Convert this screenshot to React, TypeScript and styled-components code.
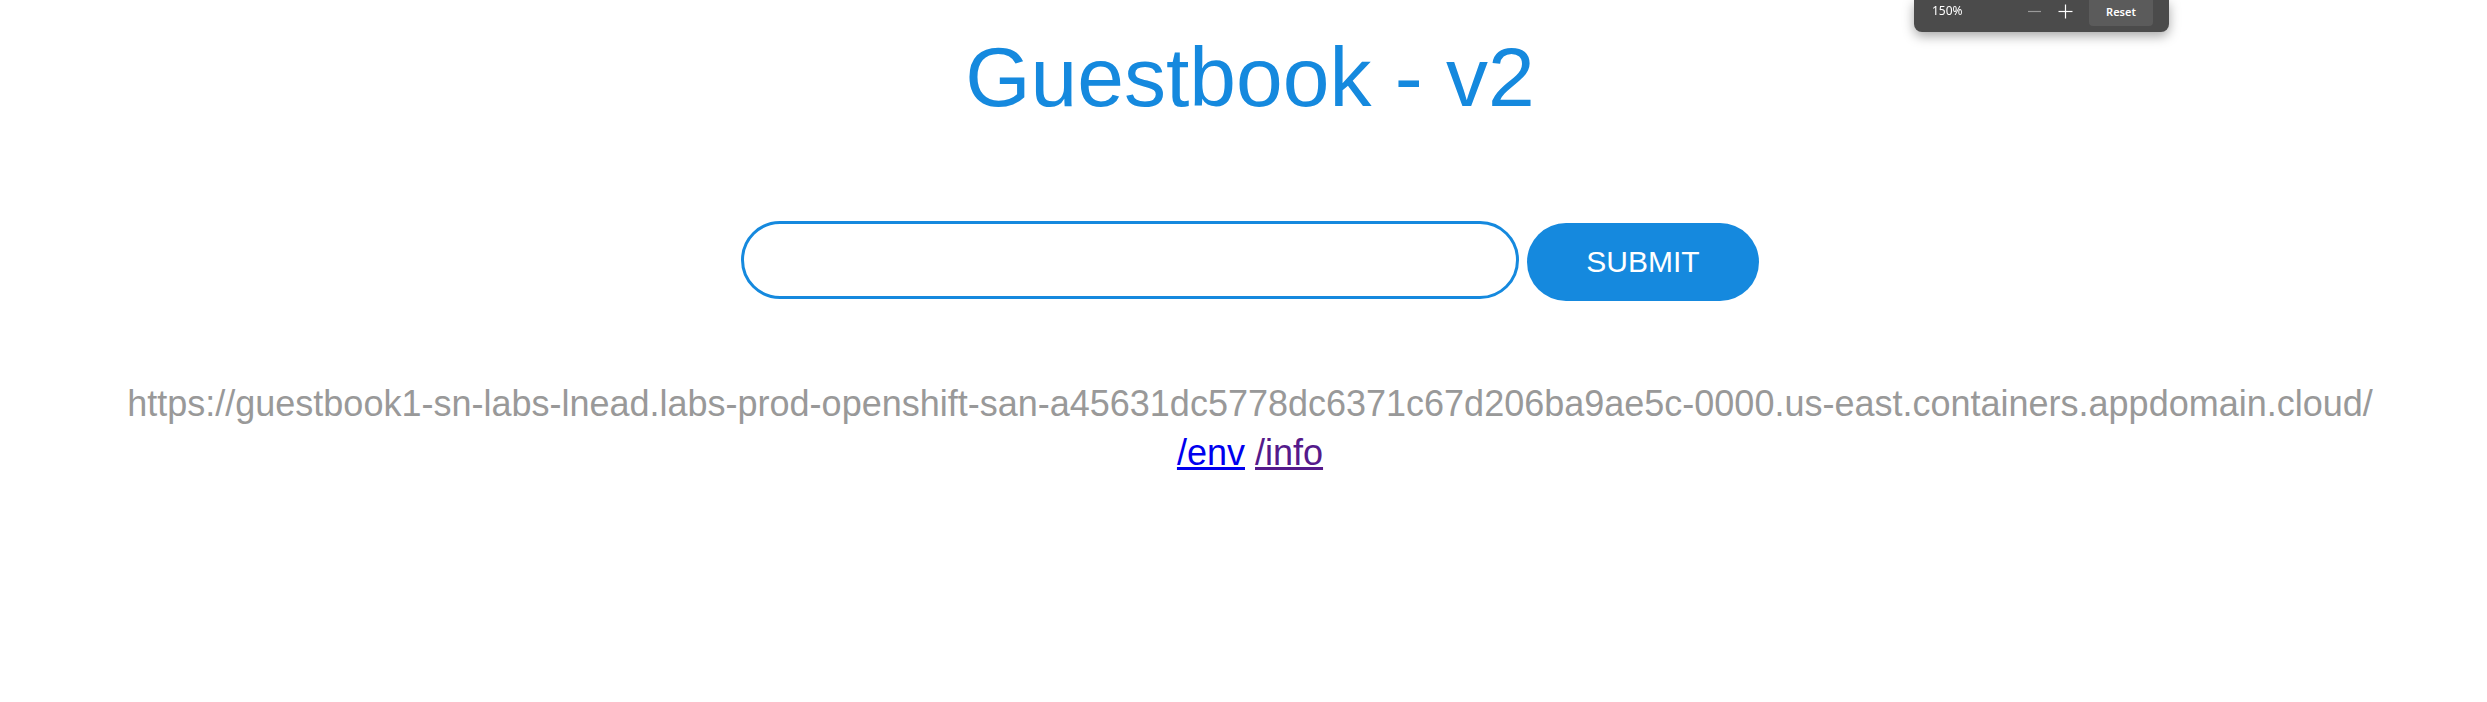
import { useState } from "react";
import styled, { createGlobalStyle } from "styled-components";

const GlobalStyle = createGlobalStyle`
  html, body {
    margin: 0;
    padding: 0;
    background: #ffffff;
  }
  body {
    font-family: "Liberation Sans", Arial, sans-serif;
  }
`;

const BLUE = "#1589de";

const Page = styled.main`
  min-height: 702px;
  padding: 30px 0 0 13px;
  text-align: center;
  box-sizing: border-box;
`;

const Title = styled.h1`
  margin: 0;
  font-size: 84px;
  font-weight: normal;
  line-height: 94px;
  color: ${BLUE};
`;

const EntryForm = styled.form`
  display: flex;
  justify-content: center;
  align-items: flex-start;
  gap: 8px;
  margin-top: 97px;
`;

const EntryInput = styled.input`
  width: 778px;
  height: 78px;
  box-sizing: border-box;
  border: 3px solid ${BLUE};
  border-radius: 39px;
  padding: 0 30px;
  font-family: "Liberation Sans", Arial, sans-serif;
  font-size: 30px;
  outline: none;
  background: #fff;
`;

const SubmitButton = styled.button`
  width: 232px;
  height: 78px;
  margin-top: 2px;
  border: none;
  border-radius: 39px;
  background: ${BLUE};
  color: #ffffff;
  font-family: "Liberation Sans", Arial, sans-serif;
  font-size: 30px;
  cursor: pointer;
`;

const HostLine = styled.div`
  margin-top: 83px;
  font-size: 36px;
  line-height: 40px;
  color: #999999;
`;

const LinkLine = styled.div`
  margin-top: 9px;
  font-size: 36px;
  line-height: 40px;
`;

const PageLink = styled.a<{ $visited?: boolean }>`
  color: ${({ $visited }) => ($visited ? "#551a8b" : "#0000ee")};
  text-decoration: underline;
`;

/* browser zoom popup, lies over the page */
const ZoomPopup = styled.div`
  position: fixed;
  top: 0;
  left: 1914px;
  width: 255px;
  height: 32px;
  background: #4b4b4b;
  border-radius: 0 0 8px 8px;
  box-shadow: 0 4px 12px rgba(0, 0, 0, 0.35);
  display: flex;
  align-items: flex-start;
  font-family: "Noto Sans", "Open Sans", sans-serif;
  color: #ffffff;
`;

const ZoomLevel = styled.span`
  margin: 2px 0 0 18px;
  width: 88px;
  font-size: 12px;
  text-align: left;
`;

const ZoomStep = styled.button<{ $dim?: boolean }>`
  width: 28px;
  height: 22px;
  padding: 0;
  margin-right: 3px;
  border: none;
  background: transparent;
  display: flex;
  align-items: center;
  justify-content: center;
  color: ${({ $dim }) => ($dim ? "#9a9a9a" : "#ffffff")};
`;

const ResetButton = styled.button`
  margin-left: auto;
  margin-right: 16px;
  width: 64px;
  height: 26px;
  border: none;
  border-radius: 0 0 4px 4px;
  background: #5b5b5b;
  color: #ffffff;
  font-family: "Noto Sans", "Open Sans", sans-serif;
  font-size: 11px;
  font-weight: 600;
  padding: 0 0 4px;
`;

const MinusIcon = () => (
  <svg width="15" height="15" viewBox="0 0 15 15">
    <line x1="1" y1="7.5" x2="14" y2="7.5" stroke="currentColor" strokeWidth="1.2" />
  </svg>
);

const PlusIcon = () => (
  <svg width="15" height="15" viewBox="0 0 15 15">
    <line x1="0.5" y1="7.5" x2="14.5" y2="7.5" stroke="currentColor" strokeWidth="1.2" />
    <line x1="7.5" y1="0.5" x2="7.5" y2="14.5" stroke="currentColor" strokeWidth="1.2" />
  </svg>
);

const HOST =
  "https://guestbook1-sn-labs-lnead.labs-prod-openshift-san-a45631dc5778dc6371c67d206ba9ae5c-0000.us-east.containers.appdomain.cloud/";

export default function App() {
  const [entry, setEntry] = useState("");

  return (
    <>
      <GlobalStyle />
      <Page>
        <Title>Guestbook - v2</Title>
        <EntryForm onSubmit={(e) => e.preventDefault()}>
          <EntryInput value={entry} onChange={(e) => setEntry(e.target.value)} />
          <SubmitButton type="submit">SUBMIT</SubmitButton>
        </EntryForm>
        <HostLine>{HOST}</HostLine>
        <LinkLine>
          <PageLink href="#env">/env</PageLink>{" "}
          <PageLink href="#info" $visited>
            /info
          </PageLink>
        </LinkLine>
      </Page>
      <ZoomPopup>
        <ZoomLevel>150%</ZoomLevel>
        <ZoomStep $dim>
          <MinusIcon />
        </ZoomStep>
        <ZoomStep>
          <PlusIcon />
        </ZoomStep>
        <ResetButton>Reset</ResetButton>
      </ZoomPopup>
    </>
  );
}
